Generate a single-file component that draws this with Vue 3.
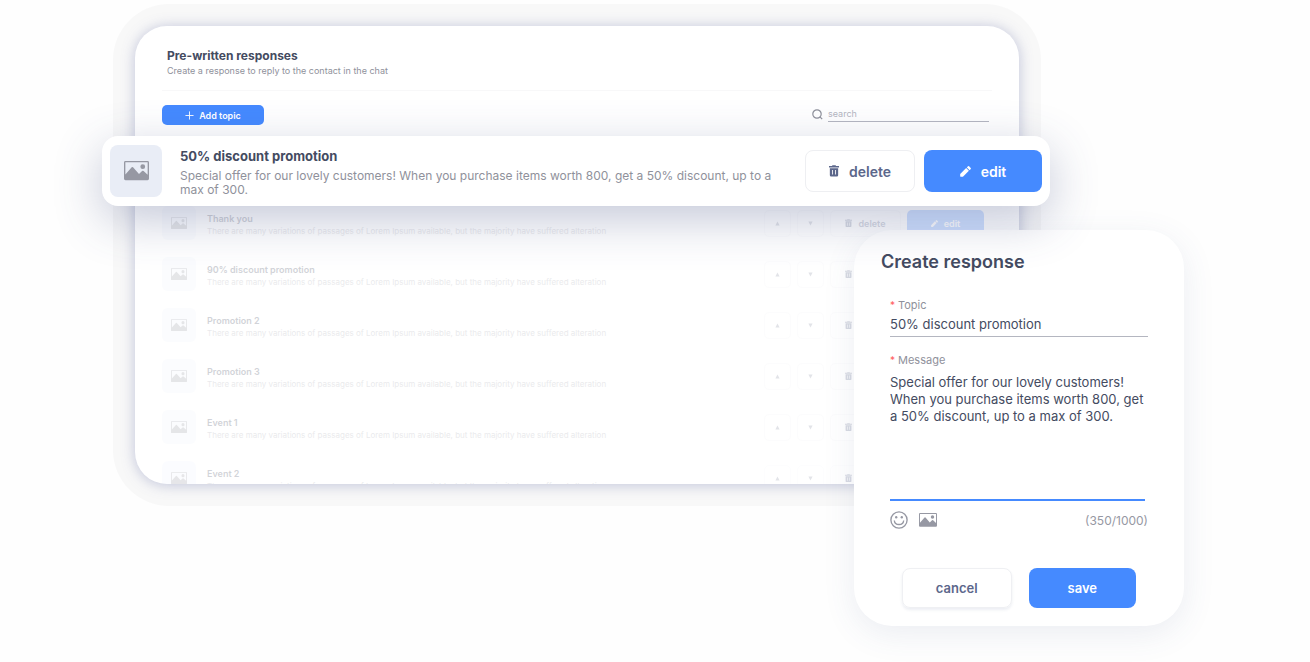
<script setup>
import { ref, h } from 'vue'

const rows = ['Thank you', '90% discount promotion', 'Promotion 2', 'Promotion 3', 'Event 1', 'Event 2']
const rowText = 'There are many variations of passages of Lorem Ipsum available, but the majority have suffered alteration'

const search = ref('')
const topic = ref('50% discount promotion')
const message = ref('Special offer for our lovely customers! When you purchase items worth 800, get a 50% discount, up to a max of 300.')

const icon = (box, d) => () =>
  h('svg', { viewBox: box, fill: 'currentColor', 'aria-hidden': 'true' }, [h('path', { d, 'fill-rule': 'evenodd' })])

const PictureIcon = icon(
  '0 0 26 20',
  'M1.500 0h23A1.500 1.500 0 0 1 26 1.500v17a1.500 1.500 0 0 1-1.500 1.500h-23A1.500 1.500 0 0 1 0 18.500v-17A1.500 1.500 0 0 1 1.500 0zM1.400 1.400v12.600l6.600-7.400q.7-.7 1.400 0l6.200 7 3.200-3.200q.8-.7 1.600 0l4.200 4V1.400zM19.500 3.400a2.500 2.500 0 1 1 0 5 2.500 2.500 0 0 1 0-5z'
)
const TrashIcon = icon(
  '0 0 12 14',
  'M3.500 1.300 4.200.3h3.600l.7 1H12v1.700H0V1.300zM1 4h10v8.300a1.500 1.500 0 0 1-1.500 1.500h-7A1.500 1.500 0 0 1 1 12.300zM3.700 6v5.500h1V6zM7.300 6v5.500h1V6z'
)
const PencilIcon = icon(
  '0 0 12 12',
  'M.2 8.800 6.700 2.300l3 3L3.200 11.800H.7q-.5 0-.5-.5zM7.500 1.500 8.700.3q.6-.5 1.200 0l1.800 1.800q.5.6 0 1.200l-1.200 1.200z'
)
</script>

<template>
  <main class="stage">
    <section class="frame">
      <div class="panel">
        <header class="head">
          <h1>Pre-written responses</h1>
          <p>Create a response to reply to the contact in the chat</p>
        </header>
        <div class="tools">
          <button class="add" type="button">
            <svg viewBox="0 0 10 10" aria-hidden="true"><path d="M5 .5v9M.5 5h9" fill="none" stroke="currentColor" /></svg>
            Add topic
          </button>
          <label class="search">
            <svg viewBox="0 0 12 12" aria-hidden="true" fill="none" stroke="currentColor" stroke-width="1.200">
              <circle cx="6" cy="6" r="4.200" /><path d="m9.200 9.200 2 2" />
            </svg>
            <input v-model="search" type="text" placeholder="search" aria-label="search" />
          </label>
        </div>
        <ul class="list">
          <li v-for="row in rows" :key="row" class="row">
            <span class="thumb"><PictureIcon /></span>
            <div class="text">
              <h3>{{ row }}</h3>
              <p>{{ rowText }}</p>
            </div>
            <button class="small arrow" type="button" aria-label="Move up">
              <svg viewBox="0 0 6 6"><path d="M3 .5 5.500 5.500h-5z" fill="currentColor" /></svg>
            </button>
            <button class="small arrow" type="button" aria-label="Move down">
              <svg viewBox="0 0 6 6"><path d="M.5.5h5L3 5.500z" fill="currentColor" /></svg>
            </button>
            <button class="small remove" type="button"><TrashIcon />delete</button>
            <button class="small change" type="button"><PencilIcon />edit</button>
          </li>
        </ul>
      </div>
    </section>

    <form class="dialog" @submit.prevent>
      <h2>Create response</h2>
      <div class="fields">
        <label class="caption" for="topic"><i>*</i>Topic</label>
        <input id="topic" v-model="topic" class="topic" type="text" />
        <label class="caption second" for="message"><i>*</i>Message</label>
        <textarea id="message" v-model="message" class="message" spellcheck="false"></textarea>
        <div class="extras">
          <button type="button" aria-label="Insert emoji">
            <svg class="smile" viewBox="0 0 20 20" fill="none" stroke="currentColor" stroke-width="1.500">
              <circle cx="10" cy="10" r="9" />
              <path d="M4.800 10.500c.5 6 9.900 6 10.400 0" />
              <circle cx="6.900" cy="6.900" r="1.300" fill="currentColor" stroke="none" />
              <circle cx="13.100" cy="6.900" r="1.300" fill="currentColor" stroke="none" />
            </svg>
          </button>
          <button type="button" aria-label="Insert picture"><PictureIcon class="pic" /></button>
          <span class="count">(350/1000)</span>
        </div>
      </div>
      <div class="actions">
        <button class="cancel" type="button">cancel</button>
        <button class="save" type="submit">save</button>
      </div>
    </form>

    <article class="feature">
      <span class="thumb"><PictureIcon /></span>
      <div class="text">
        <h2>50% discount promotion</h2>
        <p>Special offer for our lovely customers! When you purchase items worth 800, get a 50% discount, up to a max of 300.</p>
      </div>
      <button class="remove" type="button"><TrashIcon />delete</button>
      <button class="change" type="button"><PencilIcon />edit</button>
    </article>
  </main>
</template>

<style>
body {
  margin: 0;
  background: #fefefe;
}
</style>

<style scoped>
* {
  box-sizing: border-box;
}
h1, h2, h3, p, ul {
  margin: 0;
  padding: 0;
}
button, input, textarea {
  font: inherit;
  color: inherit;
  margin: 0;
  padding: 0;
  border: 0;
  background: none;
  outline: 0;
}
button {
  display: flex;
  align-items: center;
  justify-content: center;
  cursor: pointer;
}
svg {
  display: block;
  flex: none;
}
.stage {
  position: relative;
  min-height: 100vh;
  padding: 4px 269px 0 113px;
  overflow: hidden;
  font-family: Inter, "Liberation Sans", sans-serif;
  color: #444b61;
}
.frame {
  padding: 22px;
  border-radius: 56px;
  background: #f8f8f8;
}
.panel {
  padding: 0 27px;
  border-radius: 32px;
  overflow: hidden;
  background: #fff;
  box-shadow: 0 1px 14px rgba(90, 100, 160, .36);
}
.head {
  padding: 22px 5px 13px;
  border-bottom: 1px solid #f8f8f9;
}
.head h1 {
  font-size: 12px;
  line-height: 15px;
  font-weight: 700;
}
.head p {
  font-size: 9px;
  line-height: 12px;
  margin-top: 2px;
  color: #8f919b;
}
.tools {
  display: flex;
  justify-content: space-between;
  align-items: flex-start;
  padding: 14px 3px 81px 0;
}
.add {
  width: 102px;
  height: 20px;
  gap: 5px;
  border-radius: 5px;
  background: #458aff;
  color: #fff;
  font-size: 9px;
  font-weight: 600;
}
.add svg {
  width: 9px;
}
.search {
  display: flex;
  align-items: center;
  gap: 5px;
  width: 178px;
  height: 17px;
  color: #8f919b;
}
.search svg {
  width: 12px;
}
.search input {
  flex: 1;
  min-width: 0;
  height: 17px;
  border-bottom: 1px solid #b4b6c0;
  font-size: 9px;
}
.search input::placeholder {
  color: #b4b6bf;
}
.list {
  display: flex;
  flex-direction: column;
  gap: 17px;
  height: 278px;
  overflow: hidden;
  list-style: none;
}
.row {
  display: flex;
  flex: none;
  align-items: center;
  height: 34px;
  padding-right: 8px;
  opacity: .24;
}
.thumb {
  display: flex;
  align-items: center;
  justify-content: center;
  flex: none;
  width: 34px;
  height: 34px;
  border-radius: 6px;
  background: #eff3fc;
  color: #9698a3;
}
.thumb svg {
  width: 16px;
}
.row .text {
  flex: 1;
  min-width: 0;
  padding: 3px 0 0 11px;
}
.row h3 {
  font-size: 9px;
  line-height: 12px;
  font-weight: 600;
}
.row p {
  font-size: 8px;
  line-height: 12px;
  color: #a8aab2;
}
.small {
  height: 27px;
  margin-left: 6px;
  border: 1px solid #f4f5f8;
  border-radius: 5px;
  font-size: 9px;
  font-weight: 600;
  color: #5c678b;
}
.arrow {
  width: 27px;
  color: #8b90a3;
}
.arrow svg {
  width: 5px;
}
.small.remove {
  width: 71px;
  gap: 6px;
}
.small.remove svg {
  width: 7px;
}
.small.change {
  width: 77px;
  gap: 6px;
  border: 0;
  background: #458aff;
  color: #fff;
}
.small.change svg {
  width: 7px;
}
.feature {
  position: absolute;
  top: 136px;
  left: 102px;
  right: 260px;
  display: flex;
  align-items: center;
  padding: 9px 8px;
  border-radius: 16px;
  background: #fff;
  box-shadow: 0 14px 48px rgba(60, 72, 125, .3);
}
.feature .thumb {
  width: 52px;
  height: 52px;
  border-radius: 8px;
  background: #e9edf6;
}
.feature .thumb svg {
  width: 25px;
}
.feature .text {
  flex: 1;
  padding: 1px 30px 0 18px;
}
.feature h2 {
  font-size: 13px;
  line-height: 18px;
  font-weight: 700;
}
.feature p {
  margin-top: 4px;
  font-size: 12px;
  line-height: 14px;
  color: #8f919b;
}
.feature button {
  flex: none;
  height: 42px;
  border-radius: 8px;
  font-size: 14px;
  font-weight: 600;
}
.feature .remove {
  width: 110px;
  gap: 10px;
  margin-right: 9px;
  border: 1px solid #eeeff2;
  color: #5c678b;
}
.feature .remove svg {
  width: 10px;
}
.feature .change {
  width: 118px;
  gap: 10px;
  background: #458aff;
  color: #fff;
}
.feature .change svg {
  width: 11px;
}
.dialog {
  position: absolute;
  top: 230px;
  right: 126px;
  width: 330px;
  padding: 20px 36px 18px;
  border-radius: 38px;
  background: #fff;
  box-shadow: 0 8px 32px rgba(70, 85, 140, .1);
}
.dialog h2 {
  margin-left: -9px;
  font-size: 18px;
  line-height: 24px;
  font-weight: 600;
}
.fields {
  padding-top: 23px;
}
.caption {
  display: flex;
  gap: 3px;
  font-size: 11px;
  line-height: 16px;
  color: #8f919b;
}
.caption i {
  font-style: normal;
  font-size: 10px;
  color: #ff5c5c;
}
.topic {
  display: block;
  width: 100%;
  height: 24px;
  padding-bottom: 1px;
  border-bottom: 1px solid #b4b6c0;
  font-size: 13px;
}
.second {
  margin-top: 15px;
}
.message {
  display: block;
  width: 255px;
  height: 133px;
  padding-top: 6px;
  border-bottom: 2px solid #458aff;
  font-size: 13px;
  line-height: 17px;
  resize: none;
  overflow: hidden;
}
.extras {
  display: flex;
  align-items: center;
  gap: 11px;
  height: 20px;
  margin-top: 9px;
  color: #9698a3;
}
.smile {
  width: 18px;
}
.pic {
  width: 18px;
}
.count {
  margin-left: auto;
  font-size: 12px;
}
.actions {
  display: flex;
  gap: 17px;
  margin-top: 38px;
  padding: 0 12px;
}
.actions button {
  flex: 1;
  height: 40px;
  border-radius: 8px;
  font-size: 13px;
  font-weight: 600;
}
.cancel {
  border: 1px solid #eff0f3;
  box-shadow: 0 2px 3px rgba(70, 85, 140, .1);
  color: #5c678b;
}
.actions .save {
  background: #458aff;
  color: #fff;
}
</style>
